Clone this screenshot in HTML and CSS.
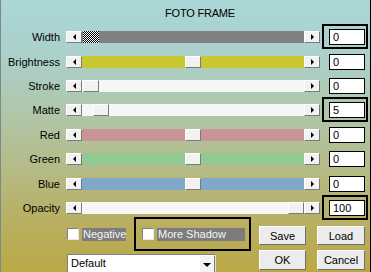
FILE: index.html
```
<!DOCTYPE html>
<html lang="en">
<head>
    <meta charset="UTF-8">
    <title>Foto Frame</title>
    <link rel="stylesheet" href="styles.css">
</head>
<body>
    <div class="dialog">
        <div class="title">FOTO FRAME</div>

        <div class="rows">
            <div class="row">
                <span class="label">Width</span>
                <div class="scroll">
                    <span class="sbtn"><i class="arr-left"></i></span>
                    <div class="track t-gray"><span class="thumb dither" style="left: 1px"></span></div>
                    <span class="sbtn"><i class="arr-right"></i></span>
                </div>
                <span class="val hl">0</span>
            </div>
            <div class="row">
                <span class="label">Brightness</span>
                <div class="scroll">
                    <span class="sbtn"><i class="arr-left"></i></span>
                    <div class="track t-yellow"><span class="thumb" style="left: 103px"></span></div>
                    <span class="sbtn"><i class="arr-right"></i></span>
                </div>
                <span class="val">0</span>
            </div>
            <div class="row">
                <span class="label">Stroke</span>
                <div class="scroll">
                    <span class="sbtn"><i class="arr-left"></i></span>
                    <div class="track t-white"><span class="thumb" style="left: 1px"></span></div>
                    <span class="sbtn"><i class="arr-right"></i></span>
                </div>
                <span class="val">0</span>
            </div>
            <div class="row">
                <span class="label">Matte</span>
                <div class="scroll">
                    <span class="sbtn"><i class="arr-left"></i></span>
                    <div class="track t-white"><span class="thumb" style="left: 11px"></span></div>
                    <span class="sbtn"><i class="arr-right"></i></span>
                </div>
                <span class="val hl">5</span>
            </div>
            <div class="row">
                <span class="label">Red</span>
                <div class="scroll">
                    <span class="sbtn"><i class="arr-left"></i></span>
                    <div class="track t-red"><span class="thumb" style="left: 103px"></span></div>
                    <span class="sbtn"><i class="arr-right"></i></span>
                </div>
                <span class="val">0</span>
            </div>
            <div class="row">
                <span class="label">Green</span>
                <div class="scroll">
                    <span class="sbtn"><i class="arr-left"></i></span>
                    <div class="track t-green"><span class="thumb" style="left: 103px"></span></div>
                    <span class="sbtn"><i class="arr-right"></i></span>
                </div>
                <span class="val">0</span>
            </div>
            <div class="row">
                <span class="label">Blue</span>
                <div class="scroll">
                    <span class="sbtn"><i class="arr-left"></i></span>
                    <div class="track t-blue"><span class="thumb" style="left: 103px"></span></div>
                    <span class="sbtn"><i class="arr-right"></i></span>
                </div>
                <span class="val">0</span>
            </div>
            <div class="row">
                <span class="label">Opacity</span>
                <div class="scroll">
                    <span class="sbtn"><i class="arr-left"></i></span>
                    <div class="track t-white"><span class="thumb" style="left: 206px"></span></div>
                    <span class="sbtn"><i class="arr-right"></i></span>
                </div>
                <span class="val hl">100</span>
            </div>
        </div>

        <div class="bottom">
            <div class="left-col">
                <div class="checks">
                    <span class="check"></span>
                    <span class="check-label">Negative</span>
                    <div class="frame">
                        <span class="check"></span>
                        <span class="check-label wide">More Shadow</span>
                    </div>
                </div>
                <div class="select">
                    <span class="select-text">Default</span>
                    <span class="select-btn"><i class="arr-down"></i></span>
                </div>
            </div>
            <div class="buttons">
                <button>Save</button>
                <button>Load</button>
                <button>OK</button>
                <button>Cancel</button>
            </div>
        </div>
    </div>
</body>
</html>
```

FILE: styles.css
```
body {
    margin: 0;
    padding: 0;
    font-family: 'Liberation Sans', Arial, sans-serif;
    font-size: 11px;
    color: #000;
}
.dialog {
    width: 371px;
    height: 272px;
    box-sizing: border-box;
    overflow: hidden;
    border-right: 1px solid #000;
    border-left: 1px solid #7a8a8a;
    background: linear-gradient(to bottom, #aad7d7 0%, #abd0c8 22%, #b0c6a8 42%, #b4bc8a 60%, #b8b064 80%, #bba845 100%);
}
.title {
    height: 25px;
    padding-left: 164px;
    line-height: 26px;
    letter-spacing: -0.2px;
}
.row {
    display: flex;
    align-items: center;
    height: 24.4px;
}
.label {
    width: 59px;
    text-align: right;
    margin-right: 6px;
}
.scroll {
    display: flex;
    width: 254px;
    height: 12px;
}
.sbtn, .thumb {
    width: 16px;
    height: 12px;
    box-sizing: border-box;
    background: #f2f2f2;
    border-top: 1px solid #fff;
    border-left: 1px solid #fff;
    border-right: 1px solid #7a7a7a;
    border-bottom: 1px solid #7a7a7a;
    display: flex;
    align-items: center;
    justify-content: center;
}
.track {
    flex: 1;
    position: relative;
}
.thumb {
    position: absolute;
    top: 0;
}
.dither {
    background: repeating-conic-gradient(#000 0 25%, #fff 0 50%) 0 0 / 2px 2px;
    border: none;
}
.t-gray { background: #808080; }
.t-yellow { background: #c9c832; }
.t-white { background: repeating-conic-gradient(#fdfdfd 0 25%, #f0f0f0 0 50%) 0 0 / 2px 2px; }
.t-red { background: #c99498; }
.t-green { background: #92c993; }
.t-blue { background: #80a8c9; }
.arr-left, .arr-right, .arr-down {
    width: 0;
    height: 0;
    display: block;
}
.arr-left {
    border-top: 3px solid transparent;
    border-bottom: 3px solid transparent;
    border-right: 3px solid #000;
}
.arr-right {
    border-top: 3px solid transparent;
    border-bottom: 3px solid transparent;
    border-left: 3px solid #000;
}
.arr-down {
    border-left: 4px solid transparent;
    border-right: 4px solid transparent;
    border-top: 4px solid #000;
}
.val {
    position: relative;
    width: 36px;
    height: 16px;
    margin-left: 9px;
    box-sizing: border-box;
    background: #fff;
    border: 1px solid #000;
    padding-left: 3px;
    line-height: 14px;
}
.val.hl::after {
    content: "";
    position: absolute;
    left: -8px;
    top: -6px;
    right: -4px;
    bottom: -5px;
    border: 2px solid #000;
}
.bottom {
    display: flex;
    margin-top: -3px;
    padding-left: 66px;
}
.left-col {
    width: 192px;
}
.checks {
    display: flex;
    align-items: center;
    height: 34px;
}
.check {
    width: 12px;
    height: 12px;
    box-sizing: border-box;
    background: #fff;
    border-top: 1px solid #808080;
    border-left: 1px solid #808080;
    border-right: 1px solid #e8e8e8;
    border-bottom: 1px solid #e8e8e8;
    margin-right: 3px;
}
.check-label {
    background: #7c7c7c;
    color: #f4f4f4;
    height: 13px;
    line-height: 13px;
    padding: 0 1px;
    width: 42px;
}
.check-label.wide {
    width: 86px;
}
.frame {
    display: flex;
    align-items: center;
    box-sizing: border-box;
    height: 34px;
    width: 117px;
    margin-left: 8px;
    padding-left: 6px;
    border: 2px solid #000;
}
.select {
    display: flex;
    width: 149px;
    height: 20px;
    margin-top: 3px;
    box-sizing: border-box;
    background: #fff;
    border: 1px solid #808080;
    border-right-color: #e0e0e0;
}
.select-text {
    flex: 1;
    padding-left: 3px;
    line-height: 17px;
}
.select-btn {
    width: 16px;
    box-sizing: border-box;
    background: #f2f2f2;
    border-left: 1px solid #fff;
    border-top: 1px solid #fff;
    border-right: 1px solid #7a7a7a;
    display: flex;
    align-items: center;
    justify-content: center;
}
.buttons {
    display: grid;
    grid-template-columns: 47px 48px;
    grid-template-rows: 19px 20px;
    column-gap: 11px;
    row-gap: 5px;
    padding-top: 9px;
}
button {
    font-family: 'Liberation Sans', Arial, sans-serif;
    font-size: 11px;
    color: #000;
    padding: 0;
    background: #ececec;
    border-top: 1px solid #fff;
    border-left: 1px solid #fff;
    border-right: 1px solid #6e6e6e;
    border-bottom: 1px solid #6e6e6e;
    border-radius: 0;
}
```
